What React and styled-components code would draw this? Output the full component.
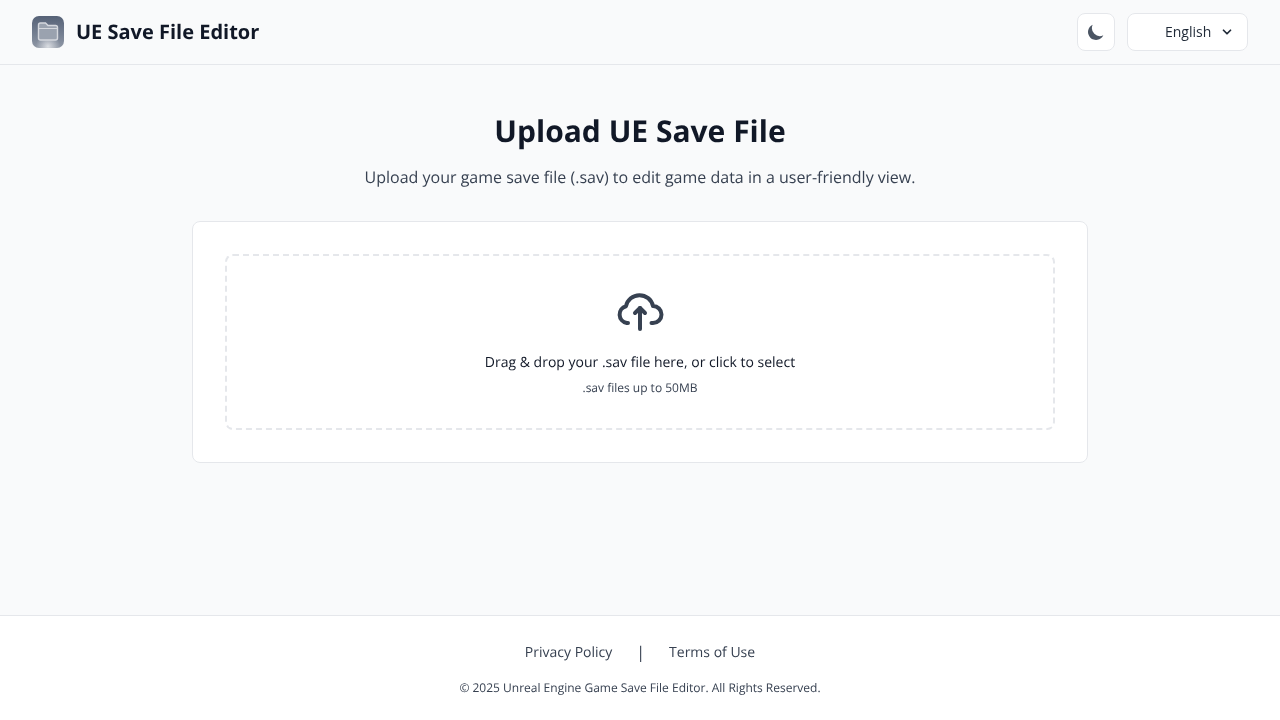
import React from 'react'
import styled, { createGlobalStyle } from 'styled-components'

const GlobalStyle = createGlobalStyle`
    html, body {
        margin: 0;
        padding: 0;
        background: #f9fafb;
        font-family: "Open Sans", sans-serif;
        text-rendering: geometricPrecision;
    }
    * {
        box-sizing: border-box;
    }
`

const Page = styled.div`
    height: 720px;
    display: flex;
    flex-direction: column;
    will-change: transform;
`

const Header = styled.header`
    height: 65px;
    padding: 0 32px;
    display: flex;
    align-items: center;
    justify-content: space-between;
    border-bottom: 1px solid #e5e7eb;
`

const Brand = styled.div`
    display: flex;
    align-items: center;
    gap: 12px;
`

const BrandName = styled.h1`
    margin: 0;
    font-size: 20px;
    line-height: 28px;
    font-weight: 700;
    color: #111827;
`

const Controls = styled.div`
    display: flex;
    align-items: center;
    gap: 12px;
`

const ThemeButton = styled.button`
    width: 38px;
    height: 38px;
    padding: 0;
    display: flex;
    align-items: center;
    justify-content: center;
    background: #fff;
    border: 1px solid #e5e7eb;
    border-radius: 8px;
    color: #4b5563;
`

const LanguageButton = styled.button`
    width: 121px;
    height: 38px;
    padding: 0 13px 0 37px;
    display: flex;
    align-items: center;
    justify-content: space-between;
    background: #fff;
    border: 1px solid #e5e7eb;
    border-radius: 8px;
    font-family: inherit;
    font-size: 14px;
    color: #1f2937;
`

const LanguageLabel = styled.span`
    margin-bottom: 2px;
`

const Main = styled.main`
    flex: 1;
    padding-top: 48px;
    display: flex;
    flex-direction: column;
    align-items: center;
`

const Title = styled.h2`
    margin: 0;
    font-size: 30px;
    line-height: 36px;
    font-weight: 700;
    color: #111827;
`

const Subtitle = styled.p`
    margin: 16px 0 0;
    font-size: 16px;
    line-height: 24px;
    color: #374151;
`

const Card = styled.section`
    width: 896px;
    margin-top: 32px;
    padding: 32px;
    background: #fff;
    border: 1px solid #e5e7eb;
    border-radius: 8px;
`

const DropZone = styled.div`
    height: 176px;
    padding-top: 32px;
    display: flex;
    flex-direction: column;
    align-items: center;
    border: 2px dashed #e5e7eb;
    border-radius: 8px;
`

const DropText = styled.p`
    margin: 17px 0 0;
    font-size: 14px;
    line-height: 20px;
    color: #111827;
`

const DropHint = styled.p`
    margin: 7px 0 0;
    font-size: 12px;
    line-height: 16px;
    color: #374151;
`

const Footer = styled.footer`
    height: 105px;
    padding-top: 25px;
    background: #fff;
    border-top: 1px solid #e5e7eb;
    display: flex;
    flex-direction: column;
    align-items: center;
`

const FooterLinks = styled.nav`
    display: flex;
    align-items: center;
    gap: 24px;
    font-size: 14px;
    line-height: 24px;
    color: #374151;
`

const FooterLink = styled.a`
    color: inherit;
    text-decoration: none;
`

const FooterDivider = styled.span`
    font-size: 16px;
    line-height: 20px;
    margin-bottom: 2px;
`

const Copyright = styled.p`
    margin: 15px 0 0;
    font-size: 12px;
    line-height: 16px;
    color: #374151;
`

const Logo = () => (
    <svg width="32" height="32" viewBox="0 0 32 32">
        <defs>
            <linearGradient id="logoBg" x1="0" y1="0" x2="0" y2="1">
                <stop offset="0" stopColor="#566277" />
                <stop offset="0.6" stopColor="#778193" />
                <stop offset="1" stopColor="#8f97a5" />
            </linearGradient>
            <radialGradient id="logoGlow" cx="0.5" cy="0.95" r="0.38">
                <stop offset="0" stopColor="#f3f4f6" stopOpacity="0.75" />
                <stop offset="1" stopColor="#f3f4f6" stopOpacity="0" />
            </radialGradient>
            <filter id="logoSoft" x="-10%" y="-10%" width="120%" height="120%">
                <feGaussianBlur stdDeviation="0.5" />
            </filter>
        </defs>
        <rect width="32" height="32" rx="7" fill="url(#logoBg)" />
        <rect width="32" height="32" rx="7" fill="url(#logoGlow)" />
        <g filter="url(#logoSoft)">
            <path
                d="M6.5 9a2 2 0 0 1 2-2h5l2.5 2.5h7.5a2 2 0 0 1 2 2V22a2 2 0 0 1-2 2h-15a2 2 0 0 1-2-2z"
                fill="#9aa2af"
                stroke="#d5d8de"
                strokeWidth="1.4"
            />
            <path d="M7 12.5h18" stroke="#d5d8de" strokeWidth="1" />
        </g>
    </svg>
)

const MoonIcon = () => (
    <svg width="20" height="20" viewBox="0 0 20 20" fill="currentColor">
        <path d="M17.3 13.3A8 8 0 0 1 6.7 2.7a8 8 0 1 0 10.6 10.6z" />
    </svg>
)

const ChevronIcon = () => (
    <svg width="14" height="14" viewBox="0 0 24 24" fill="none" stroke="#1f2937" strokeWidth="3" strokeLinecap="round" strokeLinejoin="round">
        <path d="M6 9l6 6 6-6" />
    </svg>
)

const CloudUploadIcon = () => (
    <svg width="48" height="48" viewBox="0 0 48 48" fill="none" stroke="#374151" strokeWidth="4" strokeLinecap="round" strokeLinejoin="round">
        <path d="M12 35H10.8A8.6 8.6 0 0 1 10 18.2A13.8 13.8 0 0 1 37 18A8.5 8.5 0 0 1 37 35H35.5" />
        <path d="M24 41V20" />
        <path d="M19 25L24 20L29 25" />
    </svg>
)

const App = () => (
    <Page>
        <GlobalStyle />
        <Header>
            <Brand>
                <Logo />
                <BrandName>UE Save File Editor</BrandName>
            </Brand>
            <Controls>
                <ThemeButton aria-label="Toggle theme">
                    <MoonIcon />
                </ThemeButton>
                <LanguageButton>
                    <LanguageLabel>English</LanguageLabel>
                    <ChevronIcon />
                </LanguageButton>
            </Controls>
        </Header>
        <Main>
            <Title>Upload UE Save File</Title>
            <Subtitle>Upload your game save file (.sav) to edit game data in a user-friendly view.</Subtitle>
            <Card>
                <DropZone>
                    <CloudUploadIcon />
                    <DropText>Drag &amp; drop your .sav file here, or click to select</DropText>
                    <DropHint>.sav files up to 50MB</DropHint>
                </DropZone>
            </Card>
        </Main>
        <Footer>
            <FooterLinks>
                <FooterLink href="#privacy">Privacy Policy</FooterLink>
                <FooterDivider>|</FooterDivider>
                <FooterLink href="#terms">Terms of Use</FooterLink>
            </FooterLinks>
            <Copyright>© 2025 Unreal Engine Game Save File Editor. All Rights Reserved.</Copyright>
        </Footer>
    </Page>
)

export default App
